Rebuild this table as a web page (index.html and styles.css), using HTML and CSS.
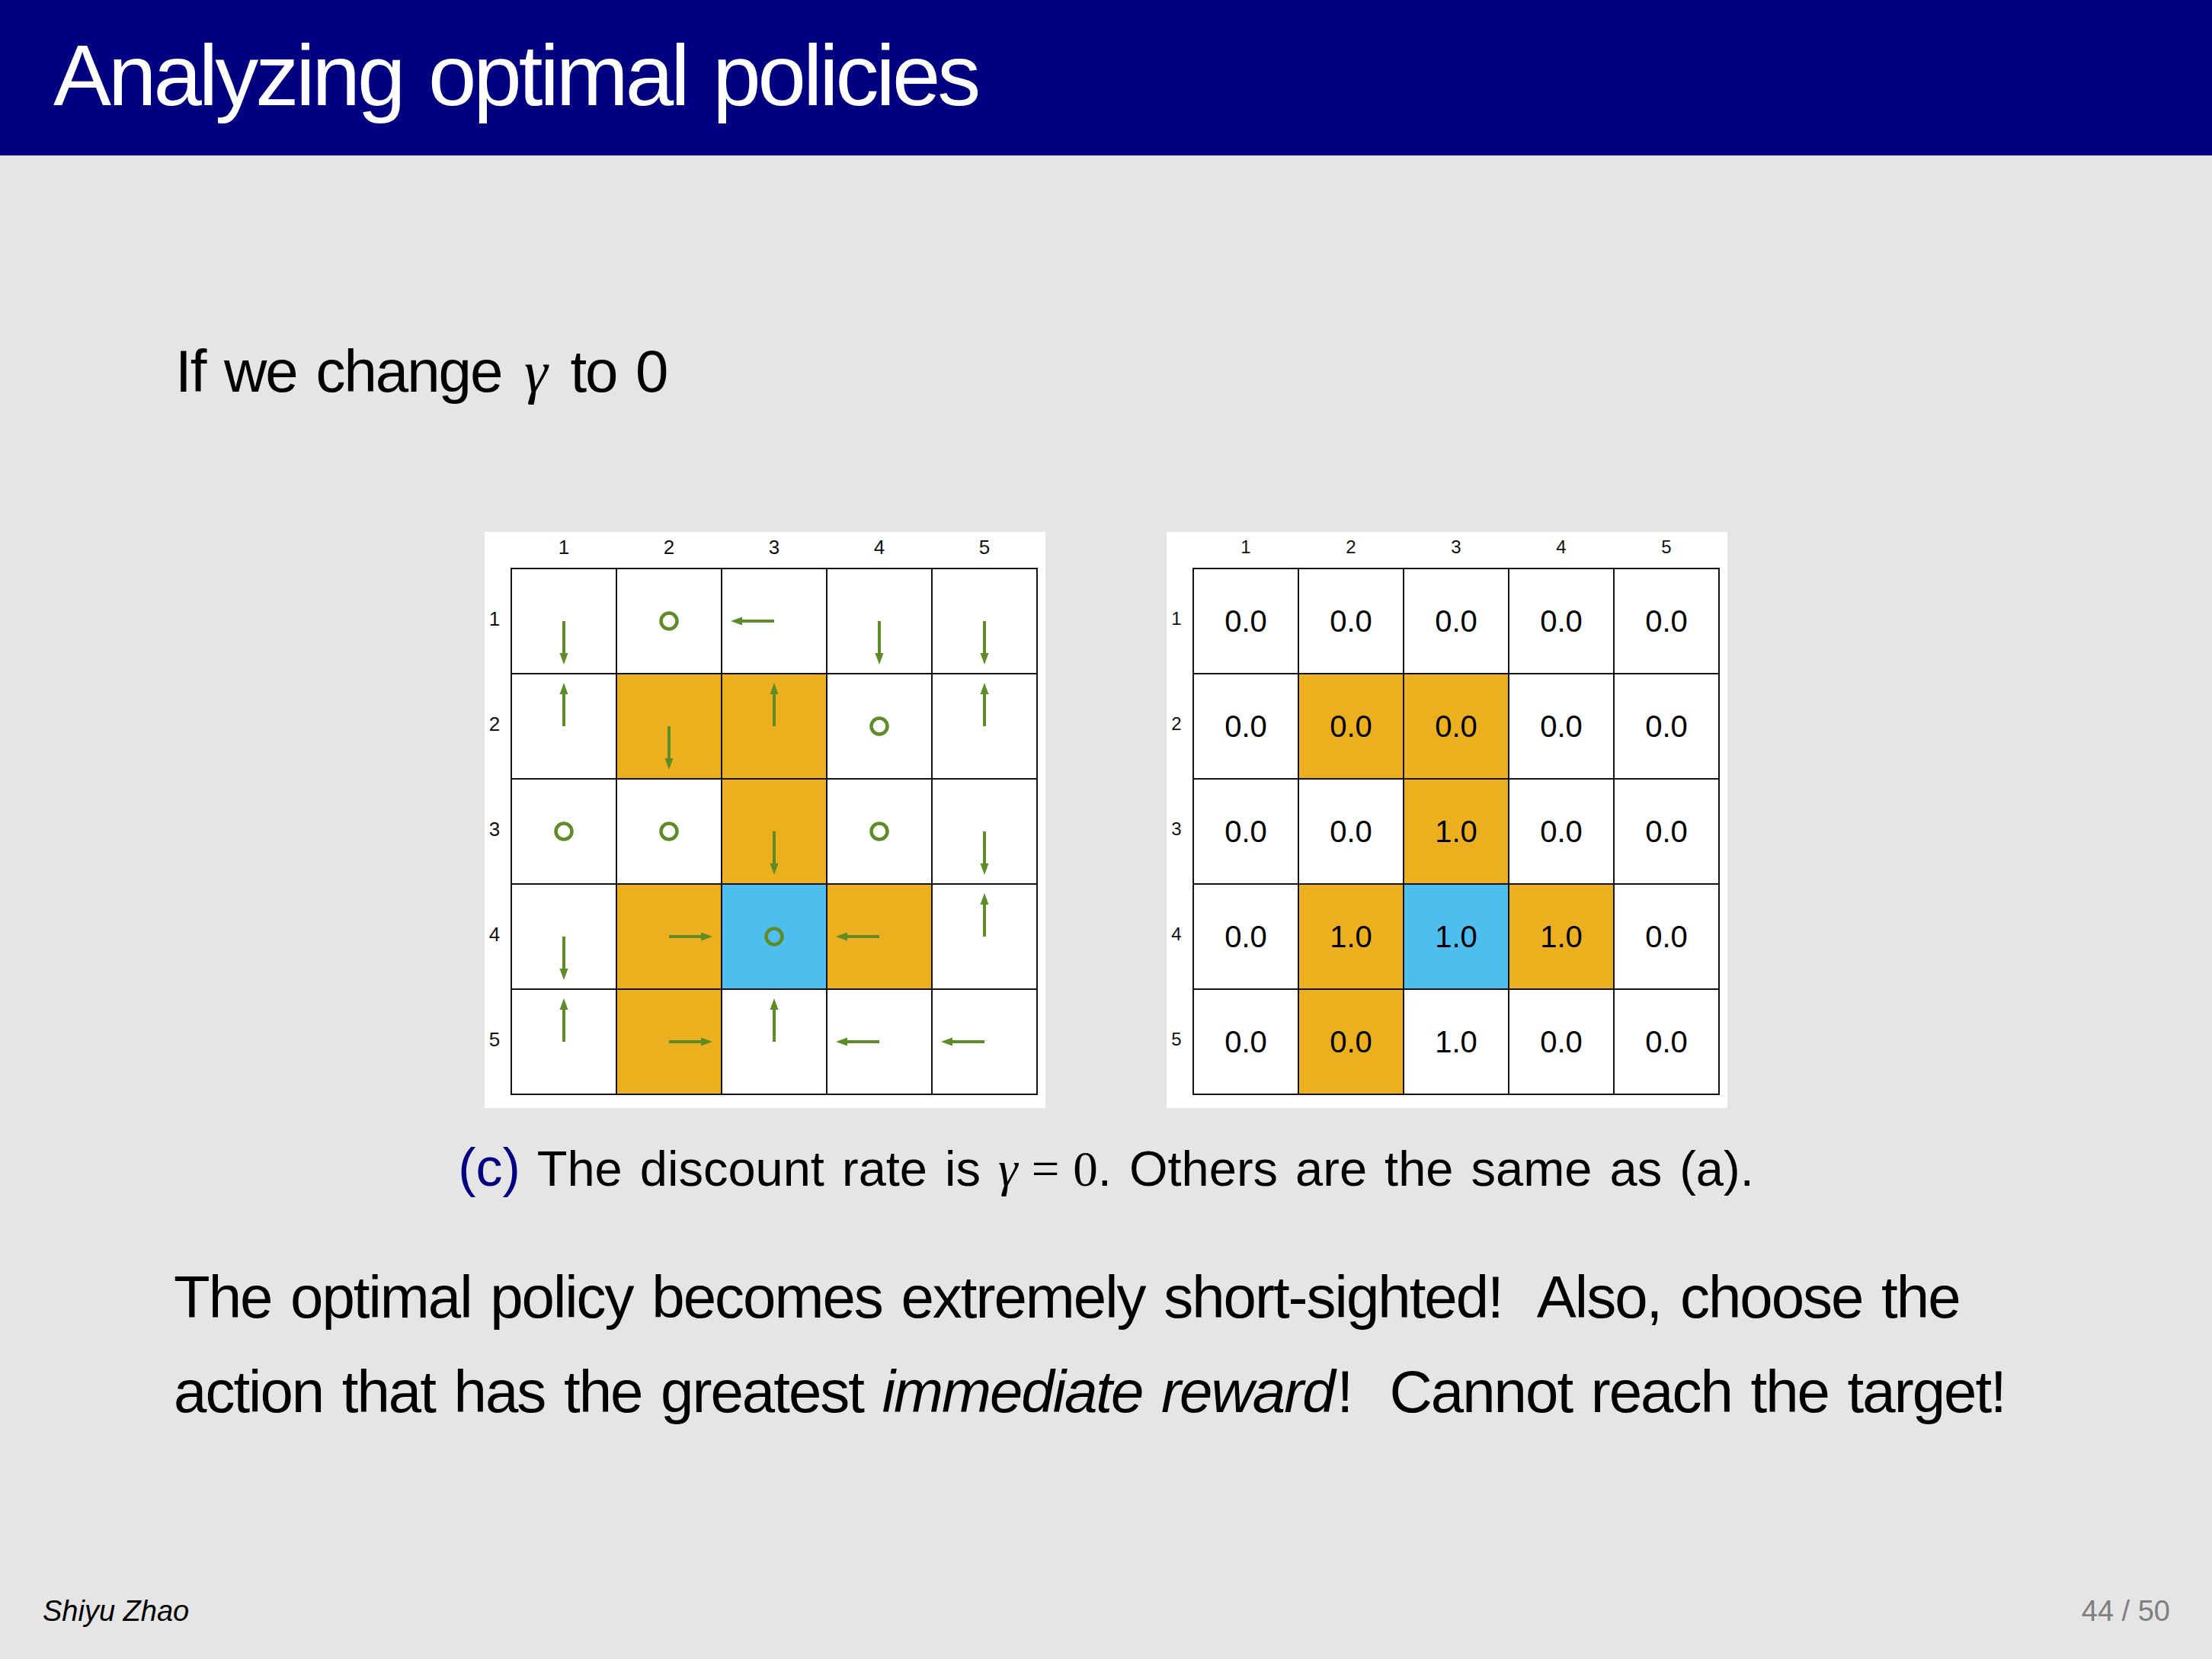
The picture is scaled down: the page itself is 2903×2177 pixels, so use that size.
FILE: index.html
```html
<!DOCTYPE html>
<html lang="en">
<head>
<meta charset="utf-8">
<title>Analyzing optimal policies</title>
<link rel="stylesheet" href="styles.css">
</head>
<body>
<svg class="defs" width="0" height="0" aria-hidden="true">
  <defs>
    <g id="ad">
      <line x1="68" y1="68" x2="68" y2="112" stroke="#5e8c26" stroke-width="4"/>
      <polygon points="62.5,110 73.5,110 68,125" fill="#5e8c26"/>
    </g>
    <g id="au"><use href="#ad" transform="rotate(180 68 68)"/></g>
    <g id="ar"><use href="#ad" transform="rotate(-90 68 68)"/></g>
    <g id="al"><use href="#ad" transform="rotate(90 68 68)"/></g>
    <g id="ao"><circle cx="68" cy="68" r="10.5" fill="none" stroke="#5e8c26" stroke-width="4.5"/></g>
  </defs>
</svg>
<div class="slide">
  <header class="titlebar"><h1 class="title">Analyzing optimal policies</h1></header>
  <main class="content">
    <p class="intro">If we change <span class="mi">γ</span> to 0</p>
    <div class="figures">
      <div class="panel">
        <div class="corner"></div>
        <div class="collabels"><span>1</span><span>2</span><span>3</span><span>4</span><span>5</span></div>
        <div class="rowlabels"><span>1</span><span>2</span><span>3</span><span>4</span><span>5</span></div>
        <div class="board">
          <div class="cell"><svg viewBox="0 0 136 136"><use href="#ad"/></svg></div>
          <div class="cell"><svg viewBox="0 0 136 136"><use href="#ao"/></svg></div>
          <div class="cell"><svg viewBox="0 0 136 136"><use href="#al"/></svg></div>
          <div class="cell"><svg viewBox="0 0 136 136"><use href="#ad"/></svg></div>
          <div class="cell"><svg viewBox="0 0 136 136"><use href="#ad"/></svg></div>

          <div class="cell"><svg viewBox="0 0 136 136"><use href="#au"/></svg></div>
          <div class="cell forbid"><svg viewBox="0 0 136 136"><use href="#ad"/></svg></div>
          <div class="cell forbid"><svg viewBox="0 0 136 136"><use href="#au"/></svg></div>
          <div class="cell"><svg viewBox="0 0 136 136"><use href="#ao"/></svg></div>
          <div class="cell"><svg viewBox="0 0 136 136"><use href="#au"/></svg></div>

          <div class="cell"><svg viewBox="0 0 136 136"><use href="#ao"/></svg></div>
          <div class="cell"><svg viewBox="0 0 136 136"><use href="#ao"/></svg></div>
          <div class="cell forbid"><svg viewBox="0 0 136 136"><use href="#ad"/></svg></div>
          <div class="cell"><svg viewBox="0 0 136 136"><use href="#ao"/></svg></div>
          <div class="cell"><svg viewBox="0 0 136 136"><use href="#ad"/></svg></div>

          <div class="cell"><svg viewBox="0 0 136 136"><use href="#ad"/></svg></div>
          <div class="cell forbid"><svg viewBox="0 0 136 136"><use href="#ar"/></svg></div>
          <div class="cell target"><svg viewBox="0 0 136 136"><use href="#ao"/></svg></div>
          <div class="cell forbid"><svg viewBox="0 0 136 136"><use href="#al"/></svg></div>
          <div class="cell"><svg viewBox="0 0 136 136"><use href="#au"/></svg></div>

          <div class="cell"><svg viewBox="0 0 136 136"><use href="#au"/></svg></div>
          <div class="cell forbid"><svg viewBox="0 0 136 136"><use href="#ar"/></svg></div>
          <div class="cell"><svg viewBox="0 0 136 136"><use href="#au"/></svg></div>
          <div class="cell"><svg viewBox="0 0 136 136"><use href="#al"/></svg></div>
          <div class="cell"><svg viewBox="0 0 136 136"><use href="#al"/></svg></div>
        </div>
      </div>
      <div class="panel panel-values">
        <div class="corner"></div>
        <div class="collabels"><span>1</span><span>2</span><span>3</span><span>4</span><span>5</span></div>
        <div class="rowlabels"><span>1</span><span>2</span><span>3</span><span>4</span><span>5</span></div>
        <div class="board values">
          <div class="cell">0.0</div>
          <div class="cell">0.0</div>
          <div class="cell">0.0</div>
          <div class="cell">0.0</div>
          <div class="cell">0.0</div>

          <div class="cell">0.0</div>
          <div class="cell forbid">0.0</div>
          <div class="cell forbid">0.0</div>
          <div class="cell">0.0</div>
          <div class="cell">0.0</div>

          <div class="cell">0.0</div>
          <div class="cell">0.0</div>
          <div class="cell forbid">1.0</div>
          <div class="cell">0.0</div>
          <div class="cell">0.0</div>

          <div class="cell">0.0</div>
          <div class="cell forbid">1.0</div>
          <div class="cell target">1.0</div>
          <div class="cell forbid">1.0</div>
          <div class="cell">0.0</div>

          <div class="cell">0.0</div>
          <div class="cell forbid">0.0</div>
          <div class="cell">1.0</div>
          <div class="cell">0.0</div>
          <div class="cell">0.0</div>
        </div>
      </div>
    </div>
    <p class="caption"><span class="tag">(c)</span> The discount rate is <span class="mi">γ</span><span class="mrel">=</span><span class="mn">0</span>. Others are the same as (a).</p>
    <p class="para">The optimal policy becomes extremely short-sighted!&nbsp; Also, choose the<br>action that has the greatest <em>immediate reward</em>!&nbsp; Cannot reach the target!</p>
  </main>
  <footer class="footer">
    <span class="author">Shiyu Zhao</span>
    <span class="pageno">44 / 50</span>
  </footer>
</div>
</body>
</html>
```
FILE: styles.css
```css
html, body {
  margin: 0;
  padding: 0;
  background: #e5e5e5;
}

.defs {
  position: absolute;
  width: 0;
  height: 0;
  overflow: hidden;
}

.slide {
  width: 2903px;
  height: 2177px;
  display: flex;
  flex-direction: column;
  background: #e5e5e5;
  font-family: "Liberation Sans", Arial, sans-serif;
  color: #000;
}

.titlebar {
  box-sizing: border-box;
  height: 204px;
  background: #000080;
  padding: 35px 0 0 70px;
}

.title {
  margin: 0;
  font-weight: normal;
  font-size: 114px;
  line-height: 128px;
  letter-spacing: -4px;
  word-spacing: 6px;
  color: #fff;
}

.content {
  display: flex;
  flex-direction: column;
}

.intro {
  margin: 221px 0 0 230px;
  font-size: 78px;
  line-height: 124px;
  letter-spacing: -2px;
  word-spacing: 5px;
}

.intro .mi {
  margin: 0 5px;
}

.mi {
  font-family: "Liberation Serif", "DejaVu Serif", serif;
  font-style: italic;
  letter-spacing: 0;
}

.figures {
  margin-top: 148px;
  display: flex;
  justify-content: center;
  gap: 159px;
}

.panel {
  background: #fff;
  display: grid;
  grid-template-columns: 34px 692px;
  grid-template-rows: 47px 692px;
  padding: 0 10px 17px 0;
}

.collabels {
  display: grid;
  grid-template-columns: repeat(5, 138px);
  padding-left: 1px;
  font-size: 26px;
  line-height: 40px;
  color: #111;
}

.collabels span,
.rowlabels span {
  display: flex;
  justify-content: center;
}

.rowlabels {
  display: grid;
  grid-template-rows: repeat(5, 138px);
  padding: 1px 8px 0 0;
  font-size: 26px;
  color: #111;
}

.rowlabels span {
  align-items: center;
  padding-bottom: 6px;
}

.board {
  box-sizing: border-box;
  width: 692px;
  height: 692px;
  display: grid;
  grid-template-columns: repeat(5, 138px);
  grid-template-rows: repeat(5, 138px);
  border-left: 2px solid #141414;
  border-top: 2px solid #141414;
}

.cell {
  box-sizing: border-box;
  background: #fff;
  border-right: 2px solid #141414;
  border-bottom: 2px solid #141414;
  display: flex;
  align-items: center;
  justify-content: center;
}

.cell svg {
  display: block;
  width: 136px;
  height: 136px;
}

.cell.forbid {
  background: #ecb01f;
}

.cell.target {
  background: #4dbeee;
}

.panel-values .collabels,
.panel-values .rowlabels {
  font-size: 24px;
}

.values .cell {
  font-size: 40px;
}

.caption {
  margin: 38px 0 0;
  text-align: center;
  font-size: 65px;
  line-height: 80px;
  letter-spacing: 0;
  word-spacing: 5px;
}

.caption .tag {
  color: #000080;
  font-size: 70px;
}

.mrel {
  font-family: "Liberation Serif", "DejaVu Serif", serif;
  margin: 0 18px;
  letter-spacing: 0;
}

.mn {
  font-family: "Liberation Serif", "DejaVu Serif", serif;
  letter-spacing: 0;
}

.para {
  margin: 66px 0 0 228px;
  font-size: 78px;
  line-height: 124px;
  letter-spacing: -2px;
  word-spacing: 5px;
}

.para em {
  font-style: italic;
  margin-right: 4px;
}

.footer {
  margin-top: auto;
  display: flex;
  justify-content: space-between;
  align-items: baseline;
  padding: 0 55px 38px 56px;
  font-size: 38px;
  line-height: 50px;
}

.author {
  font-style: italic;
  color: #000;
}

.pageno {
  color: #7f7f7f;
}
```
